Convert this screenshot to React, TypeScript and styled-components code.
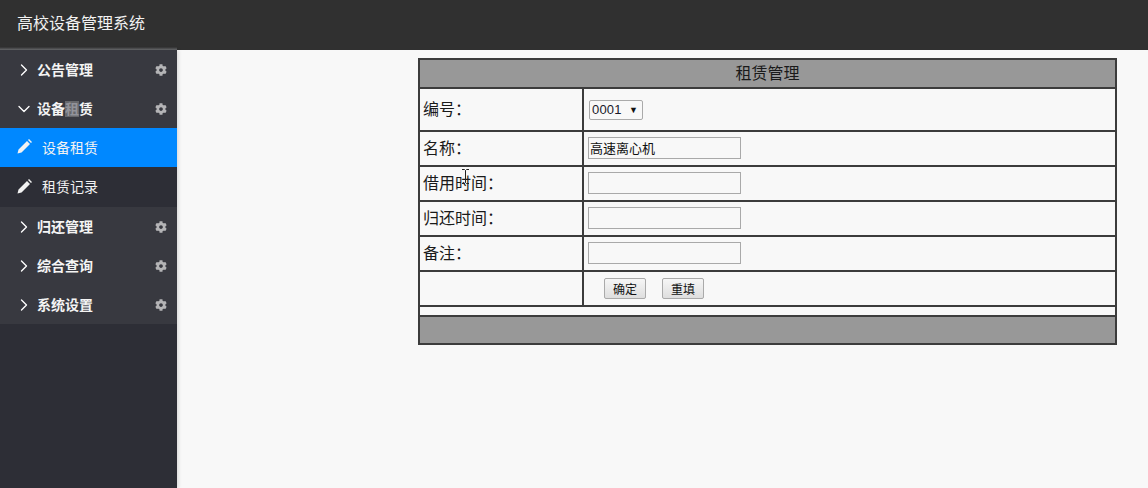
import styled, { createGlobalStyle } from "styled-components";
import { ChevronDown, ChevronRight } from "lucide-react";
import { FaCog } from "react-icons/fa";

const GlobalStyle = createGlobalStyle`
  * { box-sizing: border-box; }
  html, body { margin: 0; padding: 0; height: 100%; background: #f8f8f8; }
  body { font-family: "Liberation Sans", "Noto Sans CJK SC", sans-serif; }
`;

const menus = [
  { title: "公告管理" },
  { title: "设备租赁", open: true, subs: [{ title: "设备租赁", active: true }, { title: "租赁记录" }] },
  { title: "归还管理" },
  { title: "综合查询" },
  { title: "系统设置" },
];

export default function App() {
  return (
    <Page>
      <GlobalStyle />
      <Header>高校设备管理系统</Header>
      <Body>
        <Sidebar>
          {menus.map((m) => (
            <div key={m.title}>
              <MenuRow>
                <Arrow>
                  {m.open ? (
                    <ChevronDown size={20} strokeWidth={1.6} />
                  ) : (
                    <ChevronRight size={20} strokeWidth={1.6} />
                  )}
                </Arrow>
                <MenuTitle>
                  {m.open ? (
                    <>
                      设备<Marked>租</Marked>赁
                    </>
                  ) : (
                    m.title
                  )}
                </MenuTitle>
                <Gear>
                  <FaCog size={12} />
                </Gear>
              </MenuRow>
              {m.subs?.map((s) => (
                <SubRow key={s.title} $active={s.active}>
                  <svg width="15" height="15" viewBox="0 0 15 15">
                    <path d="M.5 14.5l1-4L10 2l3 3-8.5 8.5z M11 1l1-1 3 3-1 1z" fill="currentColor" />
                  </svg>
                  <span>{s.title}</span>
                </SubRow>
              ))}
            </div>
          ))}
        </Sidebar>
        <Main>
          <FormTable>
            <colgroup>
              <col width={164} />
              <col />
            </colgroup>
            <tbody>
              <tr>
                <TitleCell colSpan={2}>租赁管理</TitleCell>
              </tr>
              <Row $h={43}>
                <LabelCell>编号：</LabelCell>
                <td>
                  <SelectWrap>
                    <Select defaultValue="0001">
                      <option>0001</option>
                    </Select>
                    <SelectArrow>▼</SelectArrow>
                  </SelectWrap>
                </td>
              </Row>
              <Row $h={35}>
                <LabelCell>名称：</LabelCell>
                <td>
                  <TextInput defaultValue="高速离心机" />
                </td>
              </Row>
              <Row $h={35}>
                <LabelCell>
                  借用时间：
                  <Cursor width="9" height="15" viewBox="0 0 9 15">
                    <path d="M1 .5h2.5l1 1 1-1H8M4.5 1.5v12M1 14.5h2.5l1-1 1 1H8" fill="none" stroke="#222" />
                  </Cursor>
                </LabelCell>
                <td>
                  <TextInput />
                </td>
              </Row>
              <Row $h={35}>
                <LabelCell>归还时间：</LabelCell>
                <td>
                  <TextInput />
                </td>
              </Row>
              <Row $h={35}>
                <LabelCell>备注：</LabelCell>
                <td>
                  <TextInput />
                </td>
              </Row>
              <Row $h={35}>
                <LabelCell />
                <td>
                  <Buttons>
                    <FormButton type="button">确定</FormButton>
                    <FormButton type="button">重填</FormButton>
                  </Buttons>
                </td>
              </Row>
              <Row $h={10}>
                <td colSpan={2} />
              </Row>
              <tr>
                <FootCell colSpan={2} />
              </tr>
            </tbody>
          </FormTable>
        </Main>
      </Body>
    </Page>
  );
}

const Page = styled.div`
  width: 1148px;
  height: 488px;
  overflow: hidden;
  display: flex;
  flex-direction: column;
`;

const Header = styled.header`
  height: 50px;
  flex: none;
  background: #303030;
  color: #f2f2f2;
  font-size: 16px;
  line-height: 47px;
  padding-left: 17px;
`;

const Body = styled.div`
  flex: 1;
  display: flex;
  min-height: 0;
`;

const Sidebar = styled.aside`
  position: relative;
  width: 177px;
  flex: none;
  background: #2d2e36;
  box-shadow: 1px 0 4px rgba(0, 0, 0, 0.15);

  &::before {
    content: "";
    position: absolute;
    left: 0;
    right: 0;
    top: -3px;
    height: 3px;
    background: linear-gradient(#303030, #66676a);
  }
`;

const MenuRow = styled.div`
  height: 39px;
  display: flex;
  align-items: center;
  background: #383940;
  color: #f4f4f4;
  padding: 0 10px 0 14px;
`;

const Arrow = styled.span`
  width: 23px;
  display: flex;
  align-items: center;
  color: #fff;
`;

const MenuTitle = styled.span`
  flex: 1;
  font-size: 14px;
  font-weight: 700;
  padding-bottom: 2px;
`;

const Marked = styled.span`
  background: #66676b;
  color: #92939a;
`;

const Gear = styled.span`
  display: flex;
  color: #b4b4b6;
`;

const SubRow = styled.div<{ $active?: boolean }>`
  height: ${(p) => (p.$active ? 39 : 40)}px;
  display: flex;
  align-items: center;
  gap: 10px;
  padding: 0 0 2px 17px;
  font-size: 14px;
  color: #f2f2f2;
  background: ${(p) => (p.$active ? "#0088ff" : "#2d2e36")};
`;

const Main = styled.main`
  flex: 1;
  padding: 8px 31px 0 241px;
`;

const FormTable = styled.table`
  width: 699px;
  border-collapse: collapse;
  table-layout: fixed;
  border: 2px solid #3c3c3c;
  color: #1a1a1a;
  font-size: 16px;

  td {
    border: 2px solid #3c3c3c;
    padding: 0 0 3px 3px;
  }
`;

const TitleCell = styled.td`
  height: 29px;
  background: #989898;
  text-align: center;
  font-size: 16px;

  && {
    padding: 0 0 3px;
  }
`;

const FootCell = styled.td`
  height: 28px;
  background: #989898;
`;

const Row = styled.tr<{ $h: number }>`
  height: ${(p) => p.$h}px;

  td:only-child {
    padding: 0;
    height: ${(p) => p.$h}px;
    font-size: 1px;
    line-height: 1px;
  }
`;

const LabelCell = styled.td`
  position: relative;
`;

const Cursor = styled.svg`
  position: absolute;
  left: 41px;
  top: 2px;
`;

const SelectWrap = styled.div`
  position: relative;
  width: 54px;
  height: 20px;
  margin: 3px 0 0 2px;
`;

const Select = styled.select`
  appearance: none;
  width: 54px;
  height: 20px;
  padding: 0 0 0 2px;
  background: #f8f8f8;
  border: 1px solid #aaa;
  border-radius: 2px;
  font-family: "Liberation Sans", sans-serif;
  font-size: 13px;
  letter-spacing: 0.2px;
  color: #1a1a2a;
  display: block;
`;

const SelectArrow = styled.span`
  position: absolute;
  right: 5px;
  top: 5px;
  font-size: 9px;
  line-height: 10px;
  color: #111;
  pointer-events: none;
`;

const TextInput = styled.input`
  display: block;
  width: 153px;
  height: 22px;
  margin: 2px 0 0 1px;
  padding: 0 1px 2px;
  background: #f8f8f8;
  border: 1px solid #a9a9a9;
  font-family: "Noto Sans CJK SC", sans-serif;
  font-size: 13px;
  color: #111;
  outline: none;
`;

const Buttons = styled.div`
  display: flex;
  gap: 16px;
  padding: 3px 0 0 17px;
`;

const FormButton = styled.button`
  width: 42px;
  height: 21px;
  padding: 0;
  border: 1px solid #aaa;
  border-radius: 2px;
  background: linear-gradient(#f6f6f6, #dedede);
  font-family: "Noto Sans CJK SC", sans-serif;
  font-size: 12px;
  color: #111;
`;
